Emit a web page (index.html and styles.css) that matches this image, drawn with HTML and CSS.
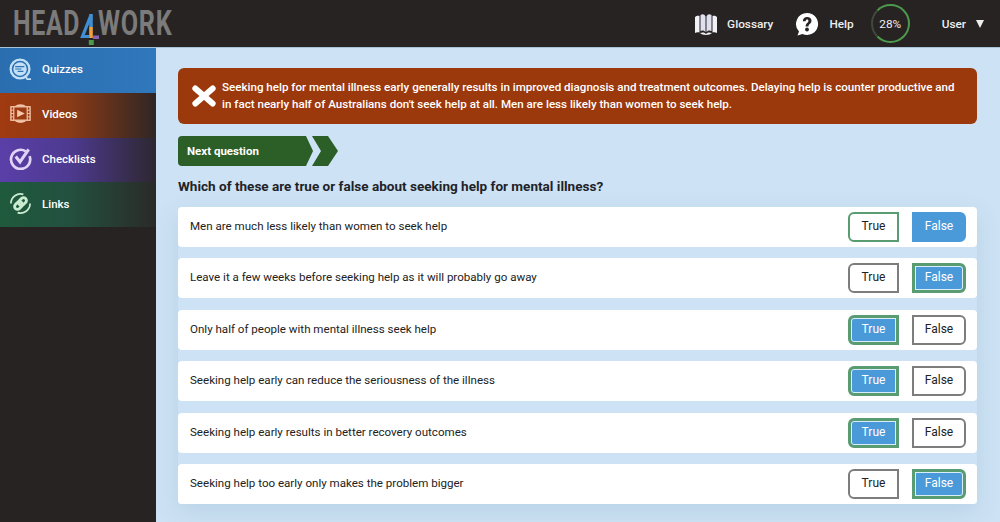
FILE: index.html
```html
<!DOCTYPE html>
<html lang="en">
<head>
  <meta charset="UTF-8" />
  <meta name="viewport" content="width=device-width, initial-scale=1.0"/>
  <title>Quizzes | Head4Work</title>
  <link rel="stylesheet" href="styles.css">
</head>
<body>
  <header class="topbar">
    <a class="logo" href="#">
      <span class="logo-word head">HEAD</span>
      <svg class="logo-four" viewBox="0 0 20 34" role="img" aria-label="4">
        <path d="M11 3 L2.500 24.500 H9" fill="none" stroke="#3f8fd2" stroke-width="3.200"/>
        <path d="M11 2 V15" stroke="#3f8fd2" stroke-width="3.600" fill="none"/>
        <path d="M11 15 V26" stroke="#f0a23c" stroke-width="3.600" fill="none"/>
        <path d="M13 23.500 H19 V27 H13 Z" fill="#8c62b5"/>
        <path d="M8.800 28 H13.800 V33 H8.800 Z" fill="#4d9a4d"/>
      </svg>
      <span class="logo-word work">WORK</span>
    </a>
    <div class="top-links">
      <a class="top-link glossary" href="#">
        <svg class="top-icon" viewBox="0 0 24 24">
          <path d="M1 5 C2.500 3.500 4.500 3.500 5.500 4 V20.500 C4 20 2.500 20 1 21 Z" fill="#f1f1f6"/>
          <path d="M23 5 C21.500 3.500 19.500 3.500 18.500 4 V20.500 C20 20 21.500 20 23 21 Z" fill="#f1f1f6"/>
          <path d="M6.500 3 C8.500 1.500 10.500 2 11.500 4.500 V20 C10.500 18.500 8.500 18 6.500 19 Z" fill="#dfe1ee"/>
          <path d="M17.500 3 C15.500 1.500 13.500 2 12.500 4.500 V20 C13.500 18.500 15.500 18 17.500 19 Z" fill="#dfe1ee"/>
          <path d="M6 21 C9 20 11 20.500 12 22 C13 20.500 15 20 18 21 C16 23.500 8 23.500 6 21 Z" fill="#f1f1f6"/>
        </svg>
        <span>Glossary</span>
      </a>
      <a class="top-link help" href="#">
        <svg class="top-icon" viewBox="0 0 24 24">
          <path d="M12 1 A11 11 0 1 1 7.500 22 L2.500 23.500 L4 19.500 A11 11 0 0 1 12 1 Z" fill="#fff"/>
          <path d="M7.800 9.200 C7.800 6.500 9.800 5 12.200 5 C14.700 5 16.500 6.500 16.500 8.800 C16.500 11.800 13.500 11.800 13.500 14.500 H10.600 C10.600 10.800 13.400 10.800 13.400 8.900 C13.400 8 12.900 7.500 12.100 7.500 C11.200 7.500 10.700 8.200 10.700 9.200 Z" fill="#272323"/>
          <circle cx="12" cy="17.500" r="1.900" fill="#272323"/>
        </svg>
        <span>Help</span>
      </a>
      <div class="progress-ring"><span>28%</span></div>
      <a class="top-link user" href="#"><span>User</span><span class="caret"></span></a>
    </div>
  </header>

  <div class="layout">
    <nav class="sidebar">
      <a class="side-item quizzes" href="#">
        <svg class="side-icon" viewBox="0 0 24 24">
          <circle cx="11.500" cy="11.500" r="9.800" fill="none" stroke="#c3e0f6" stroke-width="2.400"/>
          <circle cx="11.500" cy="11.500" r="7" fill="#c3e0f6"/>
          <path d="M6.500 9 H16 M6.500 11.500 H13 M9 14 H15" stroke="#2c72b4" stroke-width="1.200"/>
          <path d="M16.500 18.500 L19 22 H23" fill="none" stroke="#c3e0f6" stroke-width="1.800"/>
        </svg>
        <span>Quizzes</span>
      </a>
      <a class="side-item videos" href="#">
        <svg class="side-icon" viewBox="0 0 24 24">
          <path d="M6 4.500 C9 1.500 15 1.500 18 4.500 Z M6 19.500 C9 22.500 15 22.500 18 19.500 Z" fill="#f3c6ab"/>
          <rect x="2" y="5" width="20" height="14" fill="none" stroke="#f3c6ab" stroke-width="1.400"/>
          <path d="M5 5 V19 M19 5 V19" stroke="#f3c6ab" stroke-width="1.200"/>
          <path d="M2 8.500 H5 M2 12 H5 M2 15.500 H5 M19 8.500 H22 M19 12 H22 M19 15.500 H22" stroke="#f3c6ab" stroke-width="1"/>
          <path d="M8.500 8 L16.500 12 L8.500 16 Z" fill="#f3c6ab"/>
        </svg>
        <span>Videos</span>
      </a>
      <a class="side-item checklists" href="#">
        <svg class="side-icon" viewBox="0 0 24 24">
          <path d="M17.500 4.500 A10 10 0 1 0 21.500 9.500" fill="none" stroke="#e2d4f6" stroke-width="2.800"/>
          <path d="M7 10 L11.500 15.500 L20.500 2.500" fill="none" stroke="#e2d4f6" stroke-width="3.200"/>
        </svg>
        <span>Checklists</span>
      </a>
      <a class="side-item links" href="#">
        <svg class="side-icon" viewBox="0 0 24 24">
          <path d="M2 12 A10 10 0 0 1 15 2.500 M22 12 A10 10 0 0 1 9 21.500" fill="none" stroke="#c9ecd0" stroke-width="1.800"/>
          <g transform="rotate(-45 12 12)" fill="none" stroke="#c9ecd0" stroke-width="3">
            <rect x="4.500" y="9" width="9" height="6" rx="3"/>
            <rect x="10.500" y="9" width="9" height="6" rx="3"/>
          </g>
        </svg>
        <span>Links</span>
      </a>
    </nav>

    <main class="content">
      <div class="alert">
        <svg class="alert-x" viewBox="0 0 24 24">
          <path d="M4 5 L20 19 M20 5 L4 19" stroke="#fff" stroke-width="5.500" stroke-linecap="round"/>
        </svg>
        <p>Seeking help for mental illness early generally results in improved diagnosis and treatment outcomes. Delaying help is counter productive and in fact nearly half of Australians don't seek help at all. Men are less likely than women to seek help.</p>
      </div>

      <a class="next-btn" href="#">
        <span class="next-label">Next question</span>
        <span class="next-chevron"></span>
      </a>

      <h2 class="question">Which of these are true or false about seeking help for mental illness?</h2>

      <div class="rows" id="rows"></div>
    </main>
  </div>

  <script>
    // picked: what the user chose, answer: the right one
    const statements = [
      { text: 'Men are much less likely than women to seek help', picked: 'False', answer: 'True' },
      { text: 'Leave it a few weeks before seeking help as it will probably go away', picked: 'False', answer: 'False' },
      { text: 'Only half of people with mental illness seek help', picked: 'True', answer: 'True' },
      { text: 'Seeking help early can reduce the seriousness of the illness', picked: 'True', answer: 'True' },
      { text: 'Seeking help early results in better recovery outcomes', picked: 'True', answer: 'True' },
      { text: 'Seeking help too early only makes the problem bigger', picked: 'False', answer: 'False' }
    ];

    const rows = document.getElementById('rows');

    function optionBtn(s, label) {
      let cls = 'opt ' + label.toLowerCase();
      if (s.picked === label) cls += ' picked';
      if (s.answer === label) cls += ' right';
      return `<button class="${cls}">${label}</button>`;
    }

    statements.forEach(s => {
      const row = document.createElement('div');
      row.className = 'row';
      row.innerHTML = `
        <span class="row-text">${s.text}</span>
        <div class="row-opts">${optionBtn(s, 'True')}${optionBtn(s, 'False')}</div>
      `;
      rows.appendChild(row);
    });
  </script>
</body>
</html>
```

FILE: styles.css
```css
:root {
  --dark: #272323;
  --sky: #cde2f4;
  --blue: #4a9ada;
  --green: #5a9c72;
  --rust: #9b380c;
  --forest: #2c5e27;
  --grey: #7d7d7d;
}
*, *::before, *::after { box-sizing: border-box; margin: 0; padding: 0; }
html, body { height: 522px; overflow: hidden; }
body { font-family: Roboto, 'Liberation Sans', sans-serif; background: var(--sky); color: #222; }
a { text-decoration: none; color: inherit; }

/* Top bar */
.topbar { height: 47px; background: var(--dark); display: flex; align-items: center; justify-content: space-between; padding-left: 13px; }
.logo { display: flex; align-items: center; height: 47px; }
.logo-word { display: block; font-size: 35px; font-weight: 700; line-height: 47px; color: #7b7b7b; letter-spacing: 1px; transform-origin: left center; }
.head { width: 67px; transform: scaleX(.71); }
.work { width: 74px; margin-left: -2px; transform: scaleX(.72); }
.logo-four { width: 20px; height: 34px; margin: 10px 0 0 0; flex: none; }
.top-links { display: flex; align-items: center; height: 47px; color: #eee; font-size: 11.800px; font-weight: 500; }
.top-link { display: flex; align-items: center; }
.top-icon { width: 24px; height: 24px; flex: none; }
.glossary span { margin-left: 9.500px; }
.glossary { margin-right: 22px; }
.help span { margin-left: 10px; }
.help { margin-right: 17px; }
.progress-ring { width: 39px; height: 39px; border-radius: 50%; border: 2px solid #4c9a4c; border-left-color: #3d4a3d; display: flex; align-items: center; justify-content: center; font-weight: 400; }
.user { margin-left: 32px; margin-right: 16px; }
.caret { width: 0; height: 0; border-left: 4.500px solid transparent; border-right: 4.500px solid transparent; border-top: 8px solid #eee; margin-left: 10px; }

/* Sidebar */
.layout { display: flex; height: 475px; border-top: 1px solid #a9c3d8; }
.sidebar { width: 156px; flex: none; background: var(--dark); }
.side-item { display: flex; align-items: center; height: 44.800px; padding: 0 0 2.500px 9px; color: #fff; font-size: 11.500px; font-weight: 500; }
.side-item span { margin-left: 10px; }
.side-icon { width: 23px; height: 23px; flex: none; }
.quizzes { background: linear-gradient(90deg, #2a6eb0, #2f78bb); }
.videos { background: linear-gradient(90deg, #a13a10 0%, #8a3a16 45%, #2f2624 100%); }
.checklists { background: linear-gradient(90deg, #5a3fa8 0%, #4d3a90 45%, #2d2730 100%); }
.links { background: linear-gradient(90deg, #1f5a3c 0%, #235040 45%, #2a2a28 100%); }

/* Main */
.content { flex: 1; padding: 20px 23px 0 22px; }
.alert { display: flex; align-items: center; height: 56px; background: var(--rust); border-radius: 6px; padding: 0 20px 0 13px; color: #fff; font-size: 11.600px; font-weight: 500; line-height: 17px; }
.alert-x { width: 26px; height: 26px; flex: none; margin-right: 5px; }
.next-btn { display: flex; margin-top: 12px; height: 30px; color: #fff; font-size: 11.500px; font-weight: 700; }
.next-label { display: flex; align-items: center; width: 135px; padding: 0 0 1px 9px; background: var(--forest); border-radius: 4px 0 0 4px; clip-path: polygon(0 0, 128px 0, 100% 50%, 128px 100%, 0 100%); }
.next-chevron { width: 26px; margin-left: -1px; background: var(--forest); clip-path: polygon(0 0, 16px 0, 100% 50%, 16px 100%, 0 100%, 9px 50%); }
.question { font-size: 13.550px; font-weight: 700; color: #1f2328; margin-top: 12px; line-height: 17px; }
.rows { display: flex; flex-direction: column; gap: 11.500px; margin-top: 11.700px; box-shadow: 0 8px 22px rgba(90, 130, 165, .16); }
.row { display: flex; align-items: center; justify-content: space-between; height: 40px; background: #fff; border-radius: 4px; padding: 0 11px 0 12px; font-size: 11.570px; }
.row-text { margin-top: -2px; }
.row-opts { display: flex; gap: 13px; }
.opt { height: 30px; padding-bottom: 2px; background: #fff; border: 2px solid var(--grey); font-family: inherit; font-size: 12px; color: #222; cursor: pointer; }
.opt.true { width: 51px; border-radius: 6px 0 0 6px; }
.opt.false { width: 54px; border-radius: 0 6px 6px 0; }
.opt.right { border-color: var(--green); }
.opt.picked { background: var(--blue); color: #fff; border-color: var(--blue); }
.opt.picked.right { border: 3px solid var(--green); box-shadow: inset 0 0 0 1px #d8eef8; }
```
